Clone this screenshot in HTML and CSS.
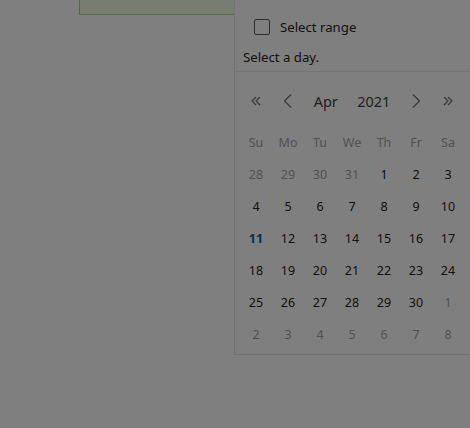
FILE: index.html
```html
<!DOCTYPE html>
<html lang="en">
<head>
    <meta charset="UTF-8">
    <meta name="viewport" content="width=device-width, initial-scale=1.0">
    <title>Date picker</title>
    <link rel="stylesheet" href="styles.css">
</head>
<body>
    <div class="page">
        <!-- Notice box, scrolled partly out of view -->
        <div class="notice"></div>
    </div>

    <!-- Date picker dropdown -->
    <div class="picker">
        <label class="range">
            <span class="check"></span>
            <span>Select range</span>
        </label>
        <div class="hint">Select a day.</div>

        <div class="calendar">
            <div class="nav">
                <span class="arrow">
                    <svg width="14" height="14" viewBox="0 0 14 14"><path d="M7 3 L3 7 L7 11 M11 3 L7 7 L11 11" fill="none" stroke="currentColor" stroke-width="1.1"/></svg>
                </span>
                <span class="arrow">
                    <svg width="14" height="16" viewBox="0 0 14 16"><path d="M10 1.5 L3.5 8 L10 14.5" fill="none" stroke="currentColor" stroke-width="1.1"/></svg>
                </span>
                <span class="title">
                    <span>Apr</span>
                    <span>2021</span>
                </span>
                <span class="arrow">
                    <svg width="14" height="16" viewBox="0 0 14 16"><path d="M4 1.5 L10.5 8 L4 14.5" fill="none" stroke="currentColor" stroke-width="1.1"/></svg>
                </span>
                <span class="arrow">
                    <svg width="14" height="14" viewBox="0 0 14 14"><path d="M3 3 L7 7 L3 11 M7 3 L11 7 L7 11" fill="none" stroke="currentColor" stroke-width="1.1"/></svg>
                </span>
            </div>

            <div class="grid" id="grid"></div>
        </div>
    </div>

    <!-- Modal dim layer -->
    <div class="overlay"></div>

    <script>
        // Build the month grid for April 2021
        const grid = document.getElementById('grid');
        const weekdays = ['Su', 'Mo', 'Tu', 'We', 'Th', 'Fr', 'Sa'];
        weekdays.forEach(function (d) {
            const cell = document.createElement('span');
            cell.className = 'cell weekday';
            cell.innerText = d;
            grid.appendChild(cell);
        });

        const days = [];
        [28, 29, 30, 31].forEach(function (d) { days.push({ n: d, out: true }); });
        for (let i = 1; i <= 30; i++) days.push({ n: i, out: false });
        for (let i = 1; i <= 8; i++) days.push({ n: i, out: true });

        days.forEach(function (day) {
            const cell = document.createElement('span');
            cell.className = 'cell day';
            if (day.out) cell.className += ' out';
            if (!day.out && day.n === 11) cell.className += ' today';
            cell.innerText = day.n;
            grid.appendChild(cell);
        });
    </script>
</body>
</html>
```

FILE: styles.css
```css
body {
    font-family: "Noto Sans", "Open Sans", sans-serif;
    margin: 0;
    background-color: #ffffff;
    color: #242424;
    height: 100vh;
    overflow: hidden;
}
.page {
    padding-left: 79px;
}
.notice {
    width: 170px;
    height: 15px;
    background-color: #f1fae9;
    border: 1px solid #9fd47f;
    border-top: none;
    box-sizing: border-box;
}
.picker {
    position: absolute;
    top: -1px;
    left: 234px;
    width: 250px;
    padding-bottom: 4px;
    background-color: #ffffff;
    border: 1px solid #e6e6e6;
}
.range {
    display: flex;
    align-items: center;
    padding: 18px 0 0 19px;
    font-size: 13.2px;
    height: 17px;
}
.check {
    width: 14px;
    height: 14px;
    border: 1px solid #5c5c5c;
    border-radius: 2px;
    margin-right: 10px;
}
.hint {
    padding: 12px 0 0 8px;
    font-size: 13.2px;
    height: 24px;
    line-height: 20px;
    border-bottom: 1px solid #ebebeb;
}
.calendar {
    padding: 13px 0 0 5px;
}
.nav {
    display: flex;
    align-items: center;
    height: 32px;
}
.arrow {
    width: 32px;
    display: flex;
    justify-content: center;
    color: #6b6b6b;
}
.title {
    width: 96px;
    display: flex;
    justify-content: space-around;
    font-size: 14.5px;
    color: #424242;
}
.grid {
    display: grid;
    grid-template-columns: repeat(7, 32px);
    grid-auto-rows: 32px;
    margin-top: 9px;
}
.cell {
    display: flex;
    justify-content: center;
    align-items: center;
    font-size: 12.5px;
}
.weekday {
    color: #a3a3a3;
}
.day {
    color: #242424;
}
.day.out {
    color: #a3a3a3;
}
.day.today {
    color: #115ea3;
    font-weight: bold;
}
.overlay {
    position: fixed;
    inset: 0;
    background-color: rgba(0, 0, 0, 0.5);
}
```
